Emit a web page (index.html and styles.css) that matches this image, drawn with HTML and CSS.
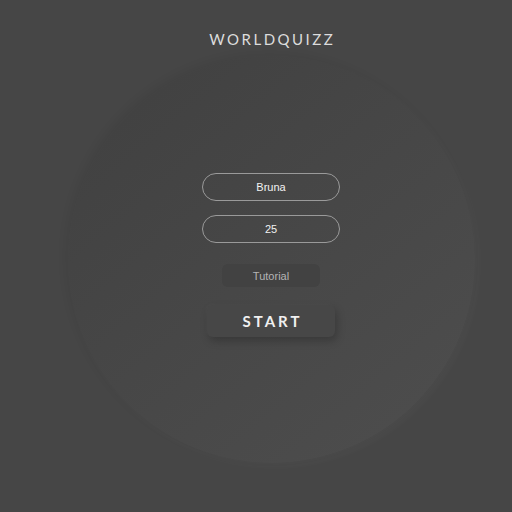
FILE: index.html
```html
<!DOCTYPE html>
<html>
<head>
<meta charset="utf-8">
<link rel="stylesheet" href="styles.css">
</head>
<body>
<main class="page">
  <h1 class="title">WORLDQUIZZ</h1>
  <div class="disc">
    <form class="form">
      <input class="field" type="text" value="Bruna">
      <input class="field field-second" type="text" value="25">
      <button type="button" class="tutorial">Tutorial</button>
      <button type="button" class="start">START</button>
    </form>
  </div>
</main>
</body>
</html>
```

FILE: styles.css
```css
html, body {
  margin: 0;
  padding: 0;
  background: #464646;
  height: 100%;
}
.page {
  display: flex;
  flex-direction: column;
  align-items: center;
  padding-left: 30px;
  padding-top: 30px;
}
.title {
  margin: 0;
  font-family: Lato, "Open Sans", sans-serif;
  font-weight: 400;
  font-size: 15px;
  line-height: 18px;
  letter-spacing: 2.5px;
  color: #dcdcdc;
  padding-left: 2.5px;
}
.disc {
  margin-top: 8px;
  width: 407px;
  height: 407px;
  border-radius: 50%;
  background: linear-gradient(140deg, #404040 0%, #474747 50%, #4e4e4e 100%);
  box-shadow: -3px -3px 8px rgba(0,0,0,0.06), 3px 3px 8px rgba(255,255,255,0.03);
  display: flex;
  align-items: flex-start;
  justify-content: center;
}
.form {
  margin-top: 117px;
  display: flex;
  flex-direction: column;
  align-items: center;
}
.field {
  box-sizing: border-box;
  width: 138px;
  height: 28px;
  border: 1px solid #9a9a9a;
  border-radius: 14px;
  background: transparent;
  color: #f2f2f2;
  font-family: "Liberation Sans", Arial, sans-serif;
  font-size: 11px;
  text-align: center;
  outline: none;
  padding: 0;
}
.field-second {
  margin-top: 14px;
}
.tutorial {
  margin-top: 21px;
  width: 98px;
  height: 23px;
  border: none;
  border-radius: 6px;
  background: #424242;
  color: #b4b4b4;
  font-family: "Liberation Sans", Arial, sans-serif;
  font-size: 11px;
  padding: 0;
}
.start {
  margin-top: 18px;
  width: 128px;
  height: 32px;
  border: none;
  border-radius: 6px;
  background: #474747;
  color: #f0f0f0;
  font-family: Lato, "Open Sans", sans-serif;
  font-weight: 700;
  font-size: 15px;
  letter-spacing: 3px;
  padding: 0 0 0 3px;
  box-shadow: 2px 4px 8px rgba(0,0,0,0.22), -1px -1px 3px rgba(255,255,255,0.03);
}
```
